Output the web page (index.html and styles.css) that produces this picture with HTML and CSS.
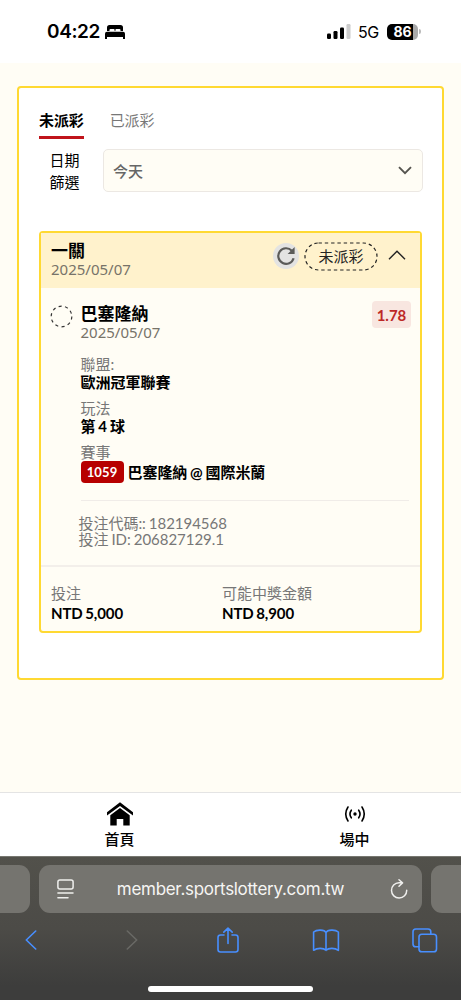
FILE: index.html
```html
<!DOCTYPE html>
<html lang="zh-Hant">
<head>
<meta charset="utf-8">
<title>未派彩</title>
<link rel="stylesheet" href="styles.css">
</head>
<body>
<header class="status">
  <span class="time">04:22</span>
  <svg class="bed" width="20" height="14" viewBox="0 0 20 14"><path d="M2 6V2.500Q2 0 4.500 0H15.500Q18 0 18 2.500V6H15.500V5Q15.500 4 14.500 4H11.200Q10.400 4 10.400 5V6H9.600V5Q9.600 4 8.800 4H5.500Q4.500 4 4.500 5V6ZM2 6.700H18Q20 6.700 20 8.700V14H18V12H2V14H0V8.700Q0 6.700 2 6.700Z"/></svg>
  <svg class="signal" width="24" height="15" viewBox="0 0 24 15"><rect x="0" y="9.500" width="4" height="5.500" rx="1.200"/><rect x="6.500" y="7" width="4" height="8" rx="1.200"/><rect x="13" y="3.500" width="4" height="11.500" rx="1.200"/><rect x="19.500" y="0" width="4" height="15" rx="1.200" fill="#ccc"/></svg>
  <span class="net">5G</span>
  <span class="battery">86</span>
  <span class="battery-tip"></span>
</header>
<main class="page">
  <section class="panel">
    <nav class="tabs"><span class="tab active">未派彩</span><span class="tab">已派彩</span></nav>
    <div class="filter">
      <div class="filter-label">日期<br>篩選</div>
      <div class="select"><span>今天</span><svg width="14" height="9" viewBox="0 0 14 9" fill="none" stroke="#55544f" stroke-width="1.900"><path d="M1 1.200 7 7.200 13 1.200"/></svg></div>
    </div>
    <article class="card">
      <div class="card-head">
        <div class="head-text"><div class="title">一關</div><div class="date">2025/05/07</div></div>
        <div class="refresh"><svg width="20" height="20" viewBox="0 0 20 20" fill="none"><path d="M17.600 12.200A7.800 7.800 0 1 1 15.800 4.700" stroke="#5b5b59" stroke-width="2.200"/><path d="M18.600 1V8H11.600Z" fill="#5b5b59"/></svg></div>
        <svg class="pill" width="74" height="29" viewBox="0 0 74 29"><rect x="1" y="1" width="72" height="27" rx="13.500" fill="none" stroke="#222" stroke-width="1.200" stroke-dasharray="3.400 2.900"/><text x="37" y="20" text-anchor="middle">未派彩</text></svg>
        <svg class="up" width="18" height="10" viewBox="0 0 18 10" fill="none" stroke="#222" stroke-width="1.400"><path d="M1 9.200 9 1.200 17 9.200"/></svg>
      </div>
      <div class="bet">
        <svg class="ring" width="24" height="24" viewBox="0 0 24 24"><circle cx="12.500" cy="12.500" r="10.300" fill="none" stroke="#333" stroke-width="1.200" stroke-dasharray="3.100 3.372"/></svg>
        <div class="bet-body">
          <div class="bet-top"><div><div class="title">巴塞隆納</div><div class="date">2025/05/07</div></div><span class="odds">1.78</span></div>
          <dl class="facts">
            <dt>聯盟:</dt><dd>歐洲冠軍聯賽</dd>
            <dt>玩法</dt><dd>第 4 球</dd>
            <dt>賽事</dt><dd class="match"><span class="code">1059</span><span>巴塞隆納 @ 國際米蘭</span></dd>
          </dl>
          <div class="ids"><div>投注代碼:: 182194568</div><div>投注 ID: 206827129.1</div></div>
        </div>
      </div>
      <div class="totals">
        <div><div class="label">投注</div><div class="amount">NTD 5,000</div></div>
        <div><div class="label">可能中獎金額</div><div class="amount">NTD 8,900</div></div>
      </div>
    </article>
  </section>
</main>
<nav class="bottom-nav">
  <a class="nav-item"><svg width="26" height="24" viewBox="0 0 26 24"><path d="M0 10.200 13 .2 26 10.200V13.600L13 4 0 13.600Z"/><path d="M3.300 13.300 13 6 22.700 13.300V23.500H16.300V17H9.700V23.500H3.300Z"/></svg><span>首頁</span></a>
  <a class="nav-item"><svg width="26" height="24" viewBox="0 0 26 24" fill="none" stroke="#000" stroke-width="1.600" stroke-linecap="round"><circle cx="13" cy="12" r="1.700" fill="#000" stroke="none"/><path d="M9.300 8.200Q6.600 12 9.300 15.800M16.700 8.200Q19.400 12 16.700 15.800M6 5Q1.500 12 6 19M20 5Q24.500 12 20 19"/></svg><span>場中</span></a>
</nav>
<footer class="browser">
  <div class="address-row">
    <div class="side left"></div>
    <div class="address">
      <svg width="17" height="20" viewBox="0 0 17 20" fill="none" stroke="#efefed" stroke-width="1.500" stroke-linecap="round"><rect x=".9" y=".9" width="15.200" height="9" rx="2"/><path d="M.9 14H16M.9 18.700H11"/></svg>
      <span class="url">member.sportslottery.com.tw</span>
      <svg width="18" height="20" viewBox="0 0 18 20" fill="none" stroke="#efefed" stroke-width="1.500" stroke-linecap="round" stroke-linejoin="round"><path d="M16.700 11.300A7.600 7.600 0 1 1 9 3.800H12.500M9 .8 12.500 3.900 9 7.200"/></svg>
    </div>
    <div class="side right"></div>
  </div>
  <div class="tools">
    <svg width="12" height="20" viewBox="0 0 12 20"><path d="M10.700 1 1.300 10 10.700 19"/></svg>
    <svg class="forward" width="12" height="20" viewBox="0 0 12 20"><path class="dim" d="M1.300 1 10.700 10 1.300 19"/></svg>
    <svg class="share" width="22" height="26" viewBox="0 0 22 26"><path d="M7 8H3.500Q1 8 1 10.500V22.500Q1 25 3.500 25H18.500Q21 25 21 22.500V10.500Q21 8 18.500 8H15M11 16.500V1.200M6.800 5.200 11 1.200 15.200 5.200"/></svg>
    <svg class="book" width="28" height="23" viewBox="0 0 28 23"><path d="M14 3.600C12.500 .6 5 .2 1.600 3V21.300C5 18.800 11.500 18.700 14 21.300 16.500 18.700 23 18.800 26.400 21.300V3C23 .2 15.500 .6 14 3.600V21.300"/></svg>
    <svg class="copies" width="26" height="25" viewBox="0 0 26 25"><path d="M6.800 18.700H3.800Q1 18.700 1 15.900V3.800Q1 1 3.800 1H16Q18.800 1 18.800 3.800V6.200"/><rect x="7" y="6.200" width="17.500" height="17.500" rx="2.800"/></svg>
  </div>
  <div class="home-bar"></div>
</footer>
</body>
</html>
```
FILE: styles.css
```css
* { box-sizing: border-box; }
body { margin: 0; width: 461px; height: 1000px; overflow: hidden; display: flex; flex-direction: column; background: #fff; color: #000; font-family: Lato, "Noto Sans CJK TC", sans-serif; font-size: 15px; }
svg { display: block; flex: none; }
.status { height: 63px; flex: none; display: flex; align-items: center; padding-left: 47px; font-family: Inter, sans-serif; }
.time { width: 58px; font-size: 19px; font-weight: 600; letter-spacing: -.4px; }
.signal { margin-left: 202px; }
.net { margin-left: 7px; width: 29px; font-size: 16px; letter-spacing: -.4px; }
.battery { width: 31px; height: 16px; border-radius: 5px; background: linear-gradient(90deg, #000 26px, #aaa 26px); color: #fff; font-size: 14px; font-weight: 700; line-height: 16px; text-align: center; letter-spacing: -.2px; }
.battery-tip { width: 2px; height: 5px; margin-left: 1px; border-radius: 0 2px 2px 0; background: #bbb; }
.page { height: 729px; flex: none; padding: 23px 17px 0; background: #fffdf5; }
.panel { height: 594px; border: 2px solid #ffd932; border-radius: 4px; background: #fff; padding: 20px 20px 0; }
.tabs { display: flex; gap: 26px; height: 31px; }
.tab { line-height: 24px; color: #777; height: 31px; letter-spacing: -.1px; }
.tab.active { color: #000; font-weight: 700; border-bottom: 3px solid #c0141b; }
.filter { display: flex; justify-content: space-between; margin-top: 10px; height: 44px; }
.filter-label { width: 40.500px; line-height: 22px; text-align: right; }
.select { width: 320px; height: 43px; margin-right: -1px; border: 1.500px solid #ece8e3; border-radius: 5px; background: #fffdf5; display: flex; align-items: center; justify-content: space-between; padding: 0 10px 1px 9px; color: #666; font-weight: 500; }
.card { margin-top: 38px; height: 402px; border: 2px solid #ffd932; border-radius: 4px; background: #fffdf5; }
.card-head { display: flex; height: 55px; background: #fff2cc; padding: 8px 14px 0 10px; }
.head-text { width: 225px; }
.title { font-size: 17px; font-weight: 700; line-height: 20px; }
.date { font-family: "Noto Sans", sans-serif; font-size: 15px; line-height: 16px; color: #777369; }
.refresh { width: 26px; height: 26px; margin-top: 2px; border-radius: 50%; background: #e3e3e2; display: grid; place-items: center; }
.pill { margin: 1px 0 0 5px; }
.pill text { font-family: "Noto Sans CJK TC", sans-serif; font-size: 15px; fill: #222; }
.up { margin: 9px 0 0 10px; }
.bet { display: flex; height: 277px; padding: 16px 9px 0 8px; }
.ring { margin-right: 7.500px; }
.bet-body { flex: 1; }
.bet-top { display: flex; justify-content: space-between; height: 36px; }
.odds { width: 39px; height: 27px; margin-top: -3px; border-radius: 4px; background: #f8e6e0; color: #bd2826; font-weight: 700; line-height: 28px; text-align: center; }
.facts { margin: 15px 0 0; width: 328px; height: 146px; border-bottom: 1.500px solid #f0ece8; word-spacing: -.8px; }
.facts dt { height: 18px; line-height: 18px; color: #777; }
.facts dd { height: 18px; line-height: 18px; margin: 0 0 8px; font-weight: 700; }
.facts .match { display: flex; align-items: center; height: 22px; letter-spacing: -.05px; }
.code { width: 43px; height: 22px; margin-right: 4px; border-radius: 4px; background: #b70000; color: #fff; font-size: 13px; line-height: 22px; text-align: center; letter-spacing: .1px; }
.ids { padding: 14px 0 0; margin-left: -2px; line-height: 16px; color: #777; word-spacing: -.8px; letter-spacing: -.03px; }
.totals { height: 66px; border-top: 2px solid #f3efea; padding: 16px 10px 0; display: grid; grid-template-columns: 171px 1fr; }
.label { color: #777; line-height: 20px; }
.amount { font-weight: 700; line-height: 20px; word-spacing: -1px; letter-spacing: -.1px; }
.bottom-nav { height: 64px; flex: none; border-top: 1px solid #e4e4e4; padding-top: 9px; display: grid; grid-template-columns: 239px 231px; }
.nav-item { display: flex; flex-direction: column; align-items: center; font-weight: 500; line-height: 24px; gap: 1px; }
.browser { height: 144px; flex: none; border-top: 1px solid #777770; background: linear-gradient(#52514b, #4c4b47 50%, #3d3d3c 90%); font-family: Inter, sans-serif; }
.address-row { display: flex; gap: 9px; height: 56px; padding-top: 8px; }
.side, .address { height: 48px; background: #75746f; }
.side { width: 30px; flex: none; }
.left { border-radius: 0 11px 11px 0; }
.right { border-radius: 11px 0 0 11px; }
.address { width: 383px; border-radius: 11px; display: flex; align-items: center; justify-content: space-between; padding: 0 14px 0 18px; color: #f5f5f3; font-size: 17px; letter-spacing: -.3px; }
.url { margin-right: 3px; }
.tools { display: flex; align-items: center; height: 54px; padding-left: 25px; }
.forward { margin-left: 89px; }
.share { margin-left: 79px; }
.book { margin-left: 73px; }
.copies { margin-left: 72px; }
.tools path, .tools rect { fill: none; stroke: #488fff; stroke-width: 1.600; stroke-linecap: round; stroke-linejoin: round; }
.tools .dim { stroke: #696965; }
.home-bar { width: 165px; height: 6px; margin: 19px auto 0; border-radius: 3px; background: #fff; }
```
